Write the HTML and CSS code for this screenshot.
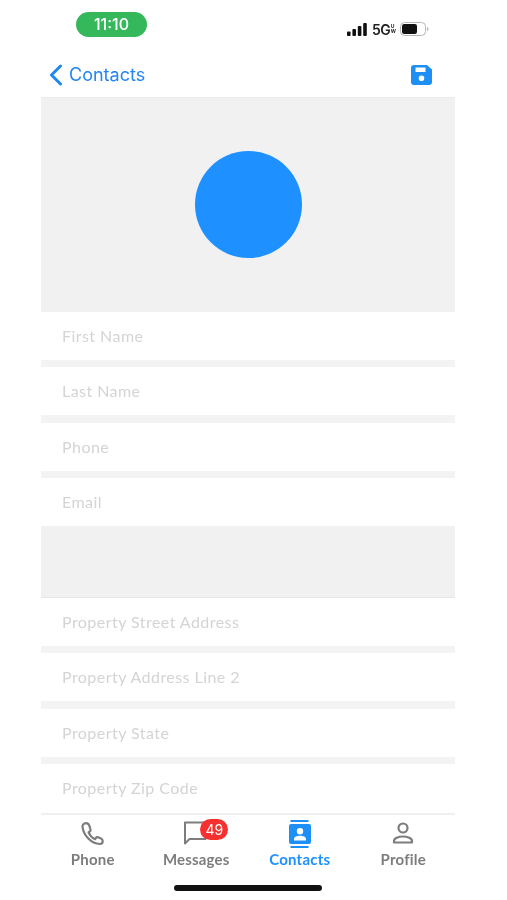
FILE: index.html
```html
<!DOCTYPE html>
<html>
<head>
	<meta charset="utf-8">
	<title>New Contact</title>
	<link rel="stylesheet" href="styles.css">
</head>
<body>
	<div class="screen">
		<div class="status">
			<div class="clock">11:10</div>
			<div class="status-right">
				<svg class="signal" width="21" height="13" viewBox="0 0 21 13">
					<rect x="0" y="8.5" width="3.6" height="4.5" rx="1" />
					<rect x="5.4" y="6" width="3.6" height="7" rx="1" />
					<rect x="10.8" y="3" width="3.6" height="10" rx="1" />
					<rect x="16.2" y="0" width="3.6" height="13" rx="1" />
				</svg>
				<span class="net">5G</span><span class="net-uw">U<br>W</span>
				<svg class="battery" width="29" height="14" viewBox="0 0 29 14">
					<rect x="0.5" y="0.5" width="25" height="13" rx="4" fill="none" stroke="#b5b5b5" />
					<rect x="2" y="2" width="15" height="10" rx="2.2" fill="#111" />
					<path d="M27 5v4c.9-.3 1.500-1 1.500-2s-.6-1.700-1.500-2z" fill="#b5b5b5" />
				</svg>
			</div>
		</div>

		<div class="nav">
			<div class="back">
				<svg width="15" height="22" viewBox="0 0 15 22">
					<path d="M12.500 2 3.500 11l9 9" fill="none" stroke="#1e88f0" stroke-width="3" stroke-linecap="round" stroke-linejoin="round" />
				</svg>
				<span>Contacts</span>
			</div>
			<svg class="save" width="21" height="20" viewBox="0 0 21 20">
				<path fill-rule="evenodd" fill="#1e8ff5" d="M3 0H16l5 4.500V17a3 3 0 0 1-3 3H3a3 3 0 0 1-3-3V3a3 3 0 0 1 3-3zM4.500 2.500V7h10V2.500zM10.500 10.500a2.800 2.800 0 1 0 0 5.600 2.800 2.800 0 0 0 0-5.600z" />
			</svg>
		</div>

		<div class="photo">
			<div class="avatar"></div>
		</div>

		<div class="fields">
			<div class="field">First Name</div>
			<div class="field">Last Name</div>
			<div class="field">Phone</div>
			<div class="field">Email</div>
		</div>

		<div class="section"></div>

		<div class="fields">
			<div class="field">Property Street Address</div>
			<div class="field">Property Address Line 2</div>
			<div class="field">Property State</div>
			<div class="field">Property Zip Code</div>
		</div>

		<div class="tabs">
			<div class="tab">
				<svg width="26" height="26" viewBox="0 0 26 26">
					<path d="M4.500 2.500c-1 .5-2 1.500-2 2.800C3 14 11 22.500 20 23c1.500 0 2.700-1.200 2.700-2.700 0-1.300-.5-2.300-1.700-2.800l-2.300-1c-1.200-.5-2.300-.2-3 .7l-.8 1c-2.700-1.300-5.200-4-6.300-6.800l1-.8c.9-.7 1.200-1.800.8-2.800L9.200 4.300C8.500 2.500 6.300 1.600 4.500 2.500z" fill="none" stroke="#7d7d7d" stroke-width="2.200" stroke-linejoin="round" />
				</svg>
				<span>Phone</span>
			</div>
			<div class="tab">
				<div class="msg-icon">
					<svg width="26" height="26" viewBox="0 0 26 26">
						<path d="M2 2.500h20.500V19H6.500L2 23.500z" fill="none" stroke="#7d7d7d" stroke-width="2" stroke-linejoin="round" />
					</svg>
					<div class="badge">49</div>
				</div>
				<span>Messages</span>
			</div>
			<div class="tab active">
				<svg width="26" height="28" viewBox="0 0 26 28">
					<rect x="3.500" y="0" width="18" height="2" fill="#1e8ff5" />
					<rect x="3.500" y="26" width="18" height="2" fill="#1e8ff5" />
					<path fill-rule="evenodd" fill="#1e8ff5" d="M4 4h18a2 2 0 0 1 2 2v16a2 2 0 0 1-2 2H4a2 2 0 0 1-2-2V6a2 2 0 0 1 2-2zM13 8a3.200 3.200 0 1 0 0 6.400A3.200 3.200 0 0 0 13 8zM7 20.500h12v-1.500c0-2-3-3.200-6-3.200s-6 1.200-6 3.200z" />
				</svg>
				<span>Contacts</span>
			</div>
			<div class="tab">
				<svg width="26" height="26" viewBox="0 0 26 26">
					<circle cx="13" cy="7" r="4.500" fill="none" stroke="#7d7d7d" stroke-width="2.200" />
					<path d="M4 21.500v-1.500c0-2.800 4.500-4.500 9-4.500s9 1.700 9 4.500v1.500z" fill="none" stroke="#7d7d7d" stroke-width="2.200" stroke-linejoin="round" />
				</svg>
				<span>Profile</span>
			</div>
		</div>

		<div class="home-wrap"><div class="home"></div></div>
	</div>
</body>
</html>
```

FILE: styles.css
```css
body {
	margin: 0;
	padding: 0;
	background: white;
	font-family: "Lato", "Liberation Sans", sans-serif;
}

.screen {
	width: 414px;
	height: 900px;
	margin-left: 41px;
	overflow: hidden;
	filter: blur(0.6px);
}

/* status bar */
.status {
	display: flex;
	justify-content: space-between;
	height: 50px;
	box-sizing: border-box;
	padding: 12px 26px 0 35px;
}

.clock {
	width: 71px;
	height: 25px;
	border-radius: 13px;
	background: #34b85a;
	color: white;
	font-family: "Inter", sans-serif;
	font-size: 16px;
	font-weight: 500;
	line-height: 25px;
	text-align: center;
}

.status-right {
	display: flex;
	align-items: center;
	height: 14px;
	margin-top: 10px;
	color: #222;
}

.signal {
	margin-right: 4px;
	fill: #111;
}

.net {
	font-family: "Inter", sans-serif;
	font-size: 14px;
	font-weight: 600;
	letter-spacing: -0.5px;
}

.net-uw {
	margin: 0 4px 0 0.5px;
	font-family: "Inter", sans-serif;
	font-size: 5px;
	font-weight: 700;
	line-height: 5px;
}

/* nav */
.nav {
	display: flex;
	justify-content: space-between;
	align-items: center;
	height: 48px;
	box-sizing: border-box;
	padding: 2px 23px 0 7px;
	border-bottom: 1px solid #ececec;
}

.back {
	display: flex;
	align-items: center;
	gap: 6px;
	color: #2386f2;
	font-family: "Inter", sans-serif;
	font-size: 18px;
}

/* photo + grey blocks */
.photo {
	display: flex;
	justify-content: center;
	align-items: center;
	height: 214px;
	box-sizing: border-box;
	padding-bottom: 1px;
	background: #f1f1f1;
}

.avatar {
	width: 107px;
	height: 107px;
	border-radius: 50%;
	background: #1e90ff;
}

.fields {
	display: flex;
	flex-direction: column;
	gap: 7.33px;
	background: #f3f3f3;
}

.field {
	height: 48px;
	line-height: 48px;
	padding-left: 21px;
	background: white;
	color: #d4d4d4;
	font-size: 16px;
	letter-spacing: 0.45px;
}

.section {
	height: 71px;
	background: #f1f1f1;
	border-bottom: 1px solid #e6e6e6;
}

/* tabs */
.tabs {
	display: grid;
	grid-template-columns: repeat(4, 1fr);
	height: 67px;
	margin-top: 1px;
	border-top: 2px solid #f0f0f0;
	box-sizing: border-box;
	padding: 5px 0 0 0;
}

.tab {
	display: flex;
	flex-direction: column;
	align-items: center;
	color: #7d7d7d;
	font-size: 15px;
	font-weight: 700;
	letter-spacing: 0.2px;
}

.tab svg {
	display: block;
}

.tab > svg {
	height: 28px;
}

.tab span {
	margin-top: 2px;
}

.tab.active {
	color: #1e90ff;
}

.msg-icon {
	position: relative;
	height: 28px;
}

.badge {
	position: absolute;
	top: -1px;
	left: 17px;
	width: 28px;
	height: 21px;
	border-radius: 11px;
	background: #f5302e;
	color: white;
	font-family: "Inter", sans-serif;
	font-size: 14px;
	font-weight: 400;
	letter-spacing: 0;
	line-height: 21px;
	text-align: center;
}

.home-wrap {
	display: flex;
	justify-content: center;
	margin-top: 5px;
}

.home {
	width: 148px;
	height: 6px;
	border-radius: 3px;
	background: #111;
}
```
